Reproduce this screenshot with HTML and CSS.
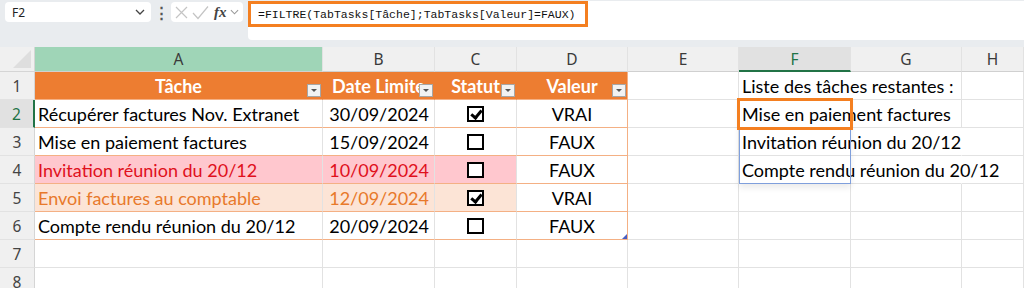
FILE: index.html
```html
<!DOCTYPE html>
<html lang="fr">
<head>
    <meta charset="UTF-8">
    <title>TabTasks - FILTRE</title>
    <link rel="stylesheet" href="styles.css">
</head>
<body>

<div class="topbar">
    <div class="namebox">
        <span>F2</span>
        <svg class="chev" width="10" height="6" viewBox="0 0 10 6"><path d="M1 1l4 4 4-4" fill="none" stroke="#444" stroke-width="1.3"/></svg>
    </div>
    <div class="dots">&#8942;</div>
    <div class="fxbox">
        <svg width="15" height="15" viewBox="0 0 15 15"><path d="M2 2l11 11M13 2L2 13" stroke="#c4c4c4" stroke-width="1.2"/></svg>
        <svg width="17" height="15" viewBox="0 0 17 15"><path d="M1 8l5 5.5L16 1.5" fill="none" stroke="#c4c4c4" stroke-width="1.2"/></svg>
        <span class="fx">fx</span>
        <svg class="chev" width="9" height="6" viewBox="0 0 10 6"><path d="M1 1l4 4 4-4" fill="none" stroke="#999" stroke-width="1.2"/></svg>
    </div>
    <div class="formula">
        <div class="formula-line">=FILTRE(TabTasks[Tâche];TabTasks[Valeur]=FAUX)</div>
    </div>
</div>

<div class="sheet">
    <!-- column headers -->
    <div class="corner"><span class="corner-tri"></span></div>
    <div class="colhdr col-a">A</div>
    <div class="colhdr">B</div>
    <div class="colhdr">C</div>
    <div class="colhdr">D</div>
    <div class="colhdr">E</div>
    <div class="colhdr col-sel">F</div>
    <div class="colhdr">G</div>
    <div class="colhdr">H</div>

    <!-- row 1 -->
    <div class="rowhdr">1</div>
    <div class="cell th">Tâche<span class="filter"></span></div>
    <div class="cell th">Date Limite<span class="filter"></span></div>
    <div class="cell th">Statut<span class="filter"></span></div>
    <div class="cell th last">Valeur<span class="filter"></span></div>
    <div class="cell"></div>
    <div class="cell txt ovf">Liste des tâches restantes :</div>
    <div class="cell"></div>
    <div class="cell"></div>

    <!-- row 2 -->
    <div class="rowhdr row-sel">2</div>
    <div class="cell tb txt">Récupérer factures Nov. Extranet</div>
    <div class="cell tb num">30/09/2024</div>
    <div class="cell tb ctr"><span class="box checked"></span></div>
    <div class="cell tb ctr last">VRAI</div>
    <div class="cell"></div>
    <div class="cell txt ovf">Mise en paiement factures</div>
    <div class="cell"></div>
    <div class="cell"></div>

    <!-- row 3 -->
    <div class="rowhdr">3</div>
    <div class="cell tb txt">Mise en paiement factures</div>
    <div class="cell tb num">15/09/2024</div>
    <div class="cell tb ctr"><span class="box"></span></div>
    <div class="cell tb ctr last">FAUX</div>
    <div class="cell"></div>
    <div class="cell txt ovf">Invitation réunion du 20/12</div>
    <div class="cell ovf"></div>
    <div class="cell"></div>

    <!-- row 4 -->
    <div class="rowhdr">4</div>
    <div class="cell tb txt late">Invitation réunion du 20/12</div>
    <div class="cell tb num late">10/09/2024</div>
    <div class="cell tb ctr late"><span class="box"></span></div>
    <div class="cell tb ctr last">FAUX</div>
    <div class="cell"></div>
    <div class="cell txt ovf">Compte rendu réunion du 20/12</div>
    <div class="cell ovf"></div>
    <div class="cell"></div>

    <!-- row 5 -->
    <div class="rowhdr">5</div>
    <div class="cell tb txt soon">Envoi factures au comptable</div>
    <div class="cell tb num soon">12/09/2024</div>
    <div class="cell tb ctr soon"><span class="box checked"></span></div>
    <div class="cell tb ctr last">VRAI</div>
    <div class="cell"></div>
    <div class="cell"></div>
    <div class="cell"></div>
    <div class="cell"></div>

    <!-- row 6 -->
    <div class="rowhdr">6</div>
    <div class="cell tb txt">Compte rendu réunion du 20/12</div>
    <div class="cell tb num">20/09/2024</div>
    <div class="cell tb ctr"><span class="box"></span></div>
    <div class="cell tb ctr last">FAUX<span class="resize"></span></div>
    <div class="cell"></div>
    <div class="cell"></div>
    <div class="cell"></div>
    <div class="cell"></div>

    <!-- row 7 -->
    <div class="rowhdr">7</div>
    <div class="cell"></div><div class="cell"></div><div class="cell"></div><div class="cell"></div>
    <div class="cell"></div><div class="cell"></div><div class="cell"></div><div class="cell"></div>

    <!-- row 8 -->
    <div class="rowhdr">8</div>
    <div class="cell"></div><div class="cell"></div><div class="cell"></div><div class="cell"></div>
    <div class="cell"></div><div class="cell"></div><div class="cell"></div><div class="cell"></div>

    <!-- overlays -->
    <div class="spill"></div>
    <div class="mark"></div>
</div>

</body>
</html>
```

FILE: styles.css
```css
/* sheet view */
body { margin: 0; background: #fff; font-family: Lato, "Open Sans", sans-serif; color: #000; overflow: hidden; }

.topbar { height: 47px; box-sizing: border-box; background: #e9ecef; display: flex; align-items: flex-start; padding: 2px 0 0 5px; }
.namebox { width: 146px; height: 20px; box-sizing: border-box; background: #fff; border-radius: 4px; display: flex; align-items: center; justify-content: space-between; padding: 0 6px 0 7px; font-family: "Noto Sans", sans-serif; font-size: 12px; color: #222; }
.dots { width: 20px; text-align: center; font-size: 15px; line-height: 20px; color: #555; font-weight: bold; }
.fxbox { width: 72px; height: 20px; box-sizing: border-box; background: #fff; border-radius: 4px; display: flex; align-items: center; gap: 3px; padding: 0 3px; }
.fx { font-family: "Liberation Serif", serif; font-style: italic; font-weight: bold; font-size: 15px; color: #444; line-height: 1; margin-left: 2px; }
.formula { flex: 1; margin: -1px 0 0 5px; height: 39px; background: #fff; border-radius: 4px 0 0 4px; }
.formula-line { width: 340px; height: 26px; box-sizing: border-box; border: 3px solid #f47f20; padding: 2px 0 0 7px; font-family: "Liberation Mono", monospace; font-size: 11.5px; color: #111; line-height: 17px; white-space: nowrap; }

.sheet { position: relative; display: grid; grid-template-columns: 35px 288px 112px 82px 111px 111px 112px 111px 1fr; grid-template-rows: 25px repeat(8, 28px); font-size: 18px; }

.corner { background: #f0f0f0; border-right: 1px solid #d5d5d5; border-bottom: 1px solid #d5d5d5; position: relative; }
.corner-tri { position: absolute; right: 3px; bottom: 3px; width: 0; height: 0; border-left: 18px solid transparent; border-bottom: 18px solid #dedede; }
.colhdr { background: #f0f0f0; border-right: 1px solid #e2e2e2; border-bottom: 1px solid #d0d0d0; display: flex; align-items: center; justify-content: center; font-family: "Noto Sans", sans-serif; font-size: 15.5px; color: #3a3a3a; }
.col-a { background: #9fd5b7; }
.col-sel { background: #e1e1e1; color: #217346; border-bottom: 2px solid #217346; }

.rowhdr { background: #f0f0f0; border-right: 1px solid #d5d5d5; border-bottom: 1px solid #e2e2e2; display: flex; align-items: center; justify-content: center; font-family: "Noto Sans", sans-serif; font-size: 15.5px; color: #444; }
.row-sel { background: #e1e1e1; color: #217346; border-right: 2px solid #217346; }

.cell { border-right: 1px solid #e2e2e2; border-bottom: 1px solid #e2e2e2; display: flex; align-items: center; white-space: nowrap; position: relative; min-width: 0; }
.txt { padding-left: 3px; }
.ovf { border-right-color: transparent; }
.num { justify-content: flex-end; padding-right: 5px; }
.ctr { justify-content: center; }

/* table TabTasks */
.th { background: #ed7d31; color: #fff; font-weight: bold; justify-content: center; border-right-color: #ed7d31; border-bottom: 1px solid #f4b084; }
.tb { border-bottom: 1px solid #f4b084; }
.last { border-right: 1px solid #f4b084; }
.late { background: #ffc7ce; color: #e0101c; }
.soon { background: #fce4d6; color: #e8792b; }

.filter { position: absolute; right: 1px; bottom: 2px; width: 14px; height: 13px; box-sizing: border-box; background: #f2f2f2; border: 1px solid #a6a6a6; }
.filter::after { content: ""; position: absolute; left: 3px; top: 4px; border-left: 3px solid transparent; border-right: 3px solid transparent; border-top: 3px solid #555; }

.box { width: 17px; height: 16px; box-sizing: border-box; border: 2px solid #000; background: #fff; position: relative; }
.box.checked::after { content: ""; position: absolute; left: 4px; top: 0; width: 4px; height: 8px; border-right: 3px solid #000; border-bottom: 3px solid #000; transform: rotate(40deg); }

.resize { position: absolute; right: 0; bottom: 0; width: 0; height: 0; border-left: 5px solid transparent; border-bottom: 5px solid #4a5fc1; }

/* spilled range and annotation */
.spill { position: absolute; left: 739px; top: 53px; width: 112px; height: 84px; box-sizing: border-box; border: 1px solid #7f9fdc; box-shadow: 0 4px 6px rgba(0,0,0,0.08); pointer-events: none; }
.mark { position: absolute; left: 737px; top: 51px; width: 116px; height: 32px; box-sizing: border-box; border: 3px solid #f47f20; }
```
